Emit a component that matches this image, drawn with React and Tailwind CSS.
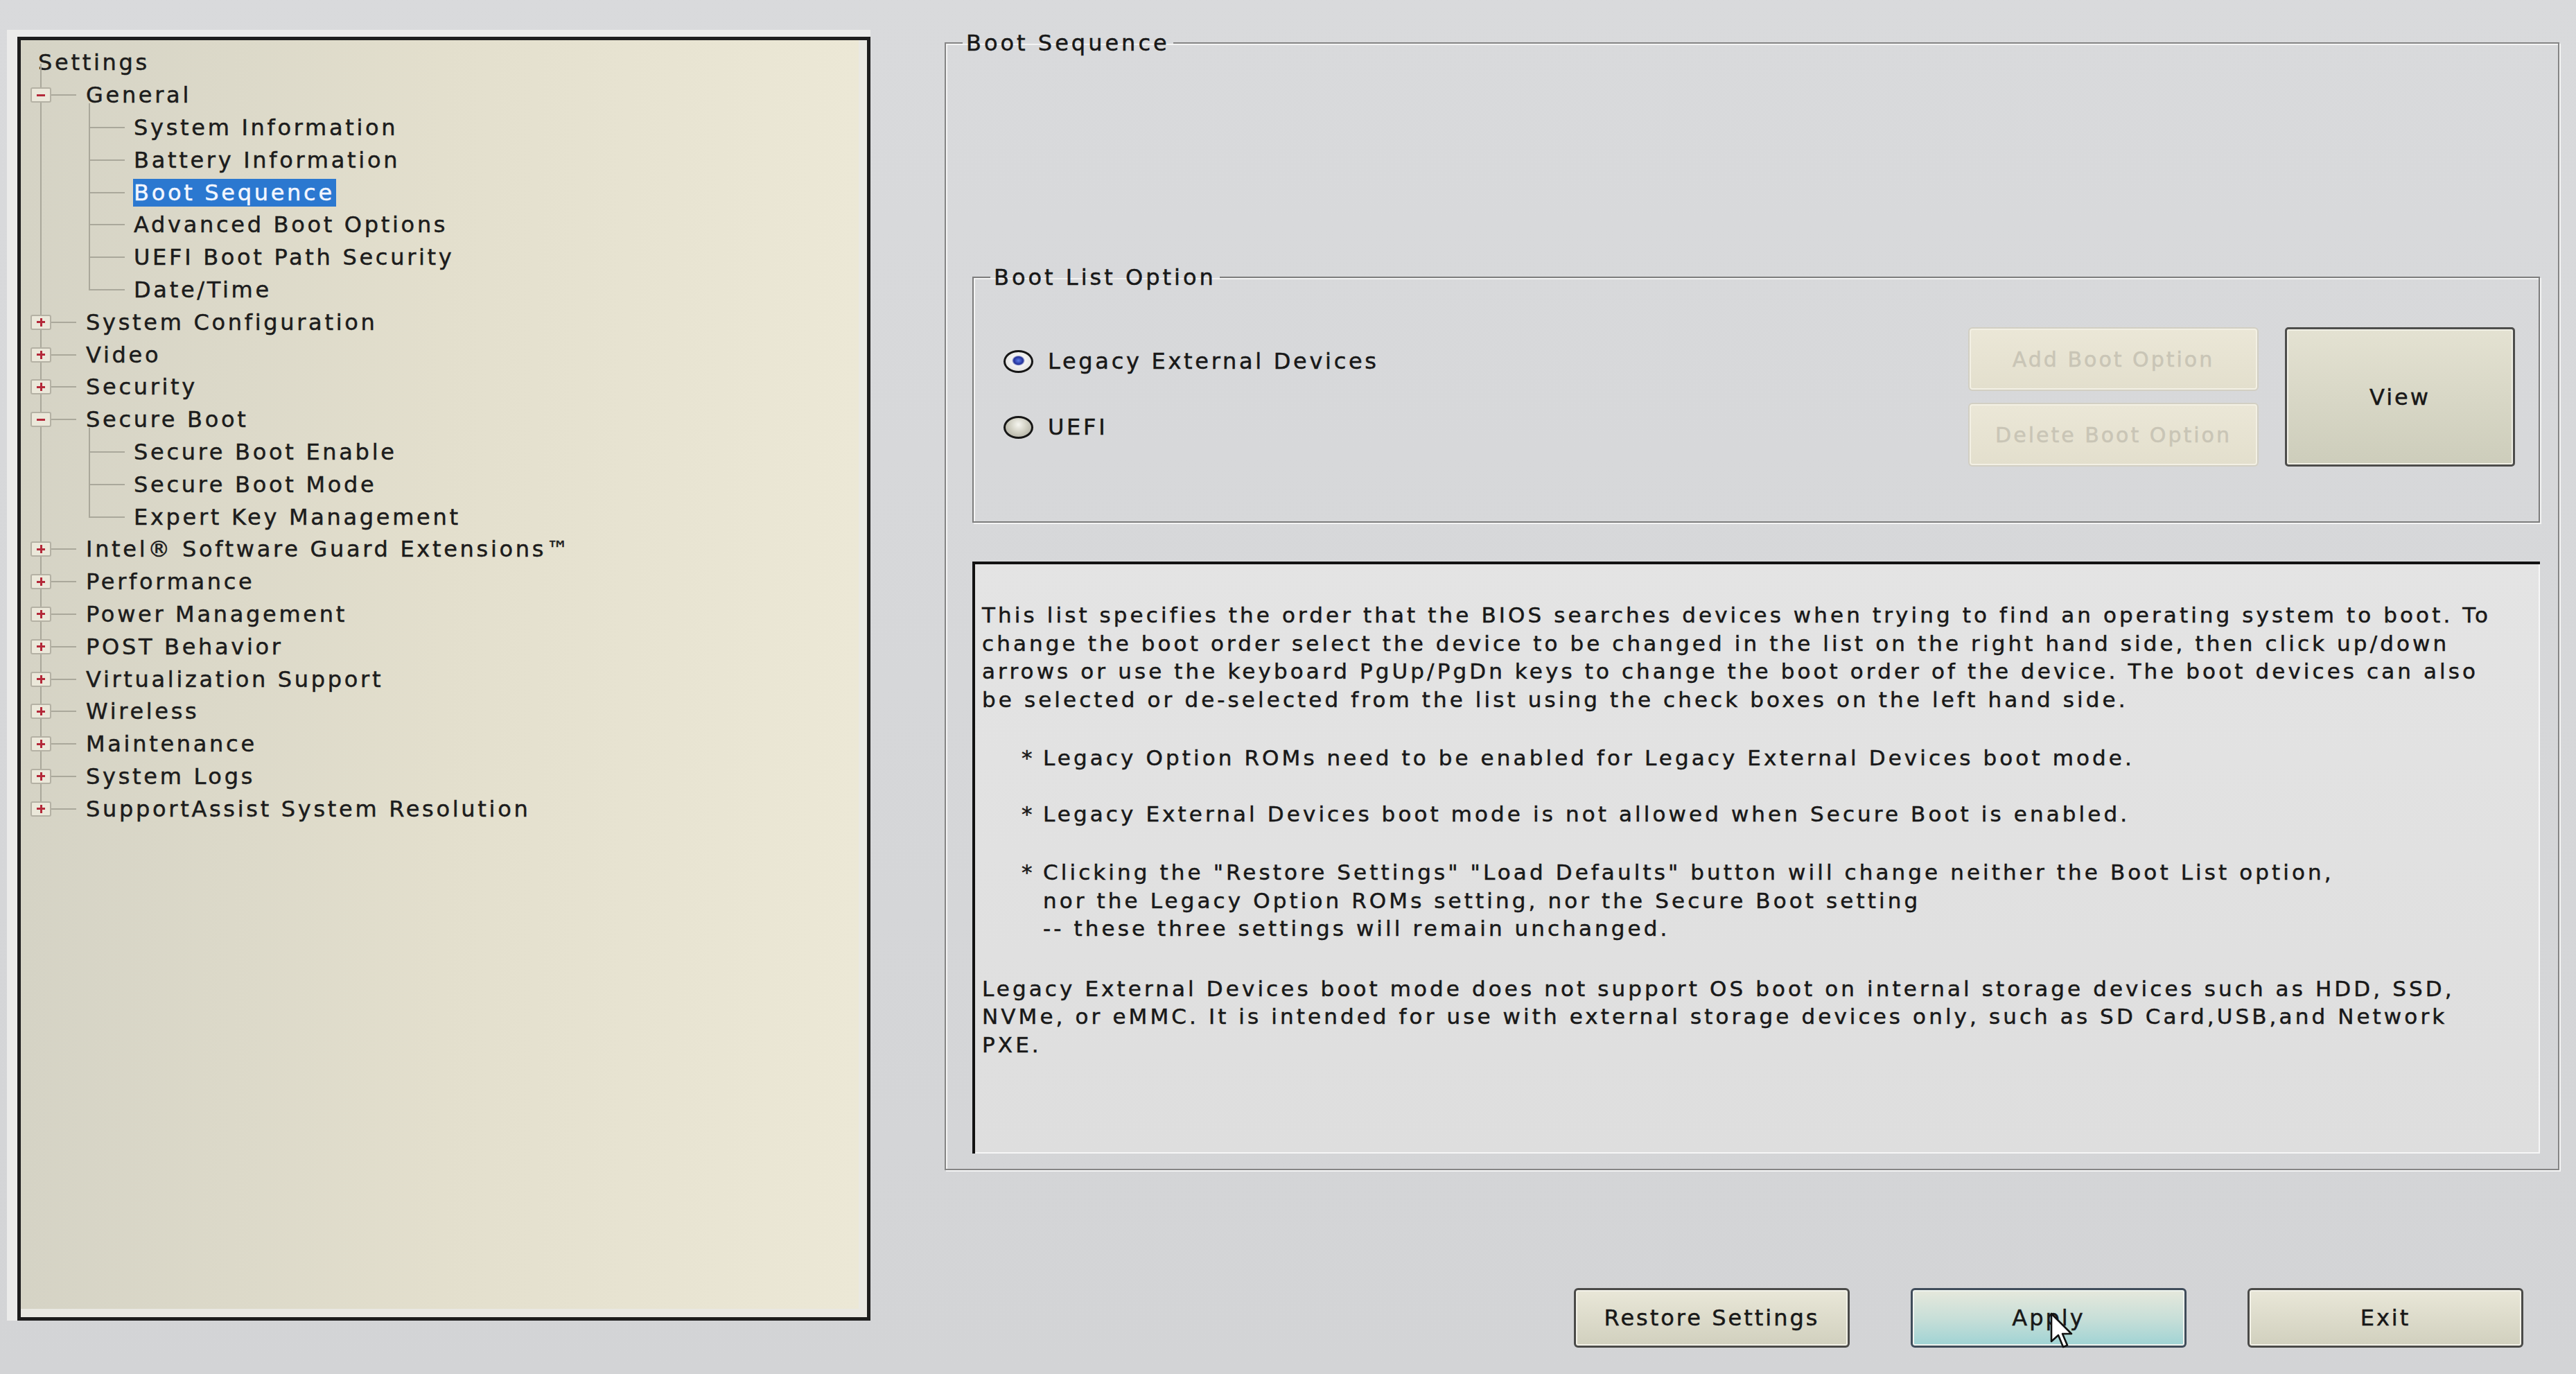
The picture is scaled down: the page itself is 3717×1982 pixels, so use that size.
import React from 'react';

const tree = [
  {
    label: 'General',
    open: true,
    children: ['System Information', 'Battery Information', 'Boot Sequence', 'Advanced Boot Options', 'UEFI Boot Path Security', 'Date/Time'],
  },
  { label: 'System Configuration' },
  { label: 'Video' },
  { label: 'Security' },
  { label: 'Secure Boot', open: true, children: ['Secure Boot Enable', 'Secure Boot Mode', 'Expert Key Management'] },
  { label: 'Intel® Software Guard Extensions™' },
  { label: 'Performance' },
  { label: 'Power Management' },
  { label: 'POST Behavior' },
  { label: 'Virtualization Support' },
  { label: 'Wireless' },
  { label: 'Maintenance' },
  { label: 'System Logs' },
  { label: 'SupportAssist System Resolution' },
];

function ExpandBox({ open }) {
  return (
    <span className="relative z-10 flex h-[22px] w-[30px] shrink-0 items-center justify-center rounded-[3px] border-2 border-[#b4b1a4] bg-[#ebe8da]">
      <span className="absolute h-[3px] w-[12px] bg-[#b42a3a]" />
      {!open && <span className="absolute h-[12px] w-[3px] bg-[#b42a3a]" />}
    </span>
  );
}

function TreeGroup({ item }) {
  return (
    <div>
      <div className="flex h-[46.8px] items-center">
        <ExpandBox open={item.open} />
        <span className="h-[2px] w-[36px] bg-[#aaa89b]" />
        <span className="ml-[14px] whitespace-nowrap">{item.label}</span>
      </div>
      {item.open && (
        <div className="relative">
          <span className="absolute left-[84px] top-[-12px] bottom-[23px] w-[2px] bg-[#aaa89b]" />
          {item.children.map((c) => (
            <div key={c} className="flex h-[46.8px] items-center pl-[84px]">
              <span className="h-[2px] w-[52px] bg-[#aaa89b]" />
              {c === 'Boot Sequence' ? (
                <span className="ml-[12px] whitespace-nowrap bg-[#2b78d0] pl-[1px] pr-[2px] leading-[40px] text-[#f2f6ff]">{c}</span>
              ) : (
                <span className="ml-[13px] whitespace-nowrap">{c}</span>
              )}
            </div>
          ))}
        </div>
      )}
    </div>
  );
}

function SettingsTree() {
  return (
    <div className="ml-[10px] mt-[43px] h-[1862px] w-[1246px] shrink-0 border-t-[10px] border-l-[15px] border-[#ebebea]">
      <div className="h-full border-[5px] border-[#1d1d1d]">
        <div className="h-full border-r-[12px] border-b-[12px] border-[#e9e8e2] shadow-[inset_-2px_-2px_0_#c9c8c0]">
          <div className="h-full bg-linear-to-r from-[#d5d3c5] via-[#e3dfcd] to-[#ece8d6] pl-[14px] pt-[9px] text-[32px] tracking-[3.7px] text-[#1c1c1c]">
            <div className="flex h-[46.8px] items-center pl-[11px]">Settings</div>
            <div className="relative">
              <span className="absolute left-[14px] top-[-22px] bottom-[23px] w-[2px] bg-[#aaa89b]" />
              {tree.map((item) => (
                <TreeGroup key={item.label} item={item} />
              ))}
            </div>
          </div>
        </div>
      </div>
    </div>
  );
}

function Radio({ checked, label }) {
  return (
    <div className="flex h-[40px] items-center gap-[21px]">
      <span
        className={
          checked
            ? 'h-[33px] w-[43px] rounded-[50%] border-[3px] border-[#161616] bg-[radial-gradient(ellipse_at_50%_45%,#5f7de8_0,#23329a_26%,#f4f4f4_36%,#d8d8d4_100%)]'
            : 'h-[33px] w-[43px] rounded-[50%] border-[3px] border-[#161616] bg-[radial-gradient(ellipse_at_50%_35%,#f6f6f0_0,#d2d1c4_45%,#a4a396_100%)]'
        }
      />
      <span className="whitespace-nowrap">{label}</span>
    </div>
  );
}

function DisabledButton({ children }) {
  return (
    <div className="flex h-[92px] w-[419px] items-center justify-center rounded-[6px] border-2 border-[#d2cfc3] bg-linear-to-b from-[#ebe7d7] to-[#e3dfcd] text-[30px] tracking-[3px] text-[#c9c5b6] shadow-[inset_0_0_0_2px_#f3f0e4]">
      {children}
    </div>
  );
}

function BottomButton({ children, active }) {
  return (
    <div
      className={
        active
          ? 'flex h-[86px] w-[398px] items-center justify-center rounded-[6px] border-[3px] border-[#3f4c5a] bg-linear-to-b from-[#e6e8dc] via-[#c8dfd8] to-[#9fd3d4] shadow-[inset_0_0_0_2px_#eef3ee] text-[32px] tracking-[3px]'
          : 'flex h-[86px] w-[398px] items-center justify-center rounded-[6px] border-[3px] border-[#4a4a48] bg-linear-to-b from-[#e9e7d8] to-[#d1d0be] shadow-[inset_0_0_0_2px_#f3f2e8] text-[32px] tracking-[3px]'
      }
    >
      {children}
    </div>
  );
}

function Description() {
  return (
    <div className="mt-[56px] h-[854px] border-t-4 border-l-4 border-[#121212] bg-linear-to-b from-[#e4e4e4] to-[#dedede] pl-[10px] pt-[53px] text-[31px] leading-[40.5px] tracking-[4.1px] shadow-[inset_-2px_-2px_0_#f6f6f6]">
      <div className="whitespace-nowrap">
        <div>This list specifies the order that the BIOS searches devices when trying to find an operating system to boot. To</div>
        <div>change the boot order select the device to be changed in the list on the right hand side, then click up/down</div>
        <div>arrows or use the keyboard PgUp/PgDn keys to change the boot order of the device. The boot devices can also</div>
        <div>be selected or de-selected from the list using the check boxes on the left hand side.</div>
      </div>
      <div className="mt-[44px] flex whitespace-nowrap pl-[57px]">
        <span className="w-[31px]">*</span>
        <div>Legacy Option ROMs need to be enabled for Legacy External Devices boot mode.</div>
      </div>
      <div className="mt-[40px] flex whitespace-nowrap pl-[57px]">
        <span className="w-[31px]">*</span>
        <div>Legacy External Devices boot mode is not allowed when Secure Boot is enabled.</div>
      </div>
      <div className="mt-[44px] flex whitespace-nowrap pl-[57px]">
        <span className="w-[31px]">*</span>
        <div>
          <div>Clicking the "Restore Settings" "Load Defaults" button will change neither the Boot List option,</div>
          <div>nor the Legacy Option ROMs setting, nor the Secure Boot setting</div>
          <div>-- these three settings will remain unchanged.</div>
        </div>
      </div>
      <div className="mt-[46px] whitespace-nowrap">
        <div>Legacy External Devices boot mode does not support OS boot on internal storage devices such as HDD, SSD,</div>
        <div>NVMe, or eMMC. It is intended for use with external storage devices only, such as SD Card,USB,and Network</div>
        <div>PXE.</div>
      </div>
    </div>
  );
}

export default function App() {
  return (
    <div className="relative flex h-[1982px] w-[3717px] overflow-hidden bg-linear-to-b from-[#d9dadc] to-[#d3d4d6] font-['DejaVu_Sans',sans-serif] text-[#181818] [-webkit-text-stroke:0.5px_currentColor]">
      <SettingsTree />

      <div className="ml-[107px] flex w-[2330px] flex-col pt-[44px]">
        <fieldset className="border-2 border-[#858585] shadow-[inset_2px_2px_0_#f4f4f4,2px_2px_0_#f4f4f4]">
          <legend className="ml-[24px] px-[5px] text-[32px] leading-[36px] tracking-[4px]">Boot Sequence</legend>
          <div className="pl-[38px] pr-[26px] pt-[302px] pb-[22px]">
            <fieldset className="border-2 border-[#7d7d7d] shadow-[inset_2px_2px_0_#f4f4f4,2px_2px_0_#f4f4f4]">
              <legend className="ml-[24px] px-[5px] text-[32px] leading-[36px] tracking-[4px]">Boot List Option</legend>
              <div className="flex items-start justify-between pl-[43px] pr-[34px] pt-[54px] pb-[79px]">
                <div className="mt-[29px] flex flex-col gap-[55px] text-[32px] tracking-[3.7px]">
                  <Radio checked label="Legacy External Devices" />
                  <Radio label="UEFI" />
                </div>
                <div className="flex gap-[38px]">
                  <div className="flex flex-col gap-[17px]">
                    <DisabledButton>Add Boot Option</DisabledButton>
                    <DisabledButton>Delete Boot Option</DisabledButton>
                  </div>
                  <div className="flex h-[201px] w-[332px] items-center justify-center rounded-[5px] border-[3px] border-[#4d4d4b] bg-linear-to-b from-[#e4e2d2] to-[#cdcdbb] text-[32px] tracking-[3px] shadow-[inset_0_0_0_2px_#f1f0e6]">
                    View
                  </div>
                </div>
              </div>
            </fieldset>
            <Description />
          </div>
        </fieldset>

        <div className="mt-[170px] flex justify-end gap-[88px] pr-[52px]">
          <BottomButton>Restore Settings</BottomButton>
          <BottomButton active>Apply</BottomButton>
          <BottomButton>Exit</BottomButton>
        </div>
      </div>

      <svg className="absolute left-[2958px] top-[1893px]" width="34" height="54" viewBox="0 0 17 27">
        <path d="M1 1 L1 21 L6 16.5 L9.5 25 L12.5 23.8 L9 15.5 L15.5 15.5 Z" fill="#ffffff" stroke="#111111" strokeWidth="1.3" strokeLinejoin="round" />
      </svg>
    </div>
  );
}
